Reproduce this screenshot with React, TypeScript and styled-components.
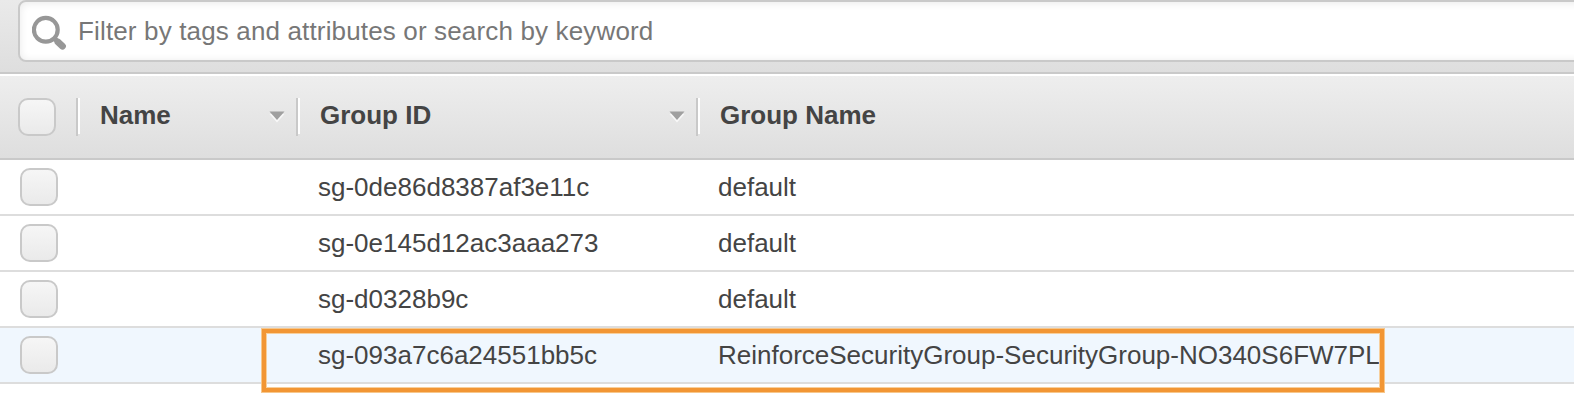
import React from "react";
import styled, { createGlobalStyle } from "styled-components";

const GlobalStyle = createGlobalStyle`
  * { box-sizing: border-box; }
  body {
    margin: 0;
    background: #fff;
    overflow: hidden;
    color: #444;
    font-family: "Liberation Sans", Arial, Helvetica, sans-serif;
    font-size: 26px;
  }
`;

const Page = styled.main`
  width: 1574px;
  height: 420px;
  overflow: hidden;
  background: #fff;
`;

const Toolbar = styled.div`
  height: 74px;
  padding-left: 18px;
  overflow: hidden;
  background: linear-gradient(#eaeaea, #dedede);
  border-bottom: 2px solid #c9c9c9;
`;

const SearchBox = styled.label`
  display: flex;
  align-items: center;
  width: 1600px;
  height: 62px;
  padding-left: 12px;
  background: #fff;
  border: 2px solid #c9c9c9;
  border-radius: 8px;
  box-shadow: inset 0 1px 8px rgba(0, 0, 0, 0.09);
`;

const SearchIcon = styled.svg`
  flex: none;
  width: 36px;
  height: 38px;
  margin-top: 4px;
`;

const Placeholder = styled.span`
  margin-left: 10px;
  color: #777;
  line-height: 58px;
  letter-spacing: 0.15px;
  white-space: pre;
`;

const HeaderRow = styled.div`
  display: flex;
  height: 86px;
  border-top: 2px solid #fff;
  border-bottom: 2px solid #c9c9c9;
  background: linear-gradient(#eeeeee, #dedede) padding-box;
`;

const CheckCell = styled.div<{ $inset: number; $width: number }>`
  display: flex;
  flex: none;
  align-items: center;
  width: ${(p) => p.$width}px;
  padding-left: ${(p) => p.$inset}px;
`;

const Checkbox = styled.span`
  width: 38px;
  height: 38px;
  border: 2px solid #c9c9c9;
  border-radius: 10px;
  background: linear-gradient(#f6f6f6, #eaeaea);
`;

const HeaderCell = styled.div<{ $width?: number }>`
  display: flex;
  align-items: center;
  flex: ${(p) => (p.$width ? `0 0 ${p.$width}px` : "1")};
`;

const Divider = styled.span`
  flex: none;
  width: 4px;
  height: 38px;
  border-left: 2px solid #c9c9c9;

  &::after {
    content: "";
    display: block;
    width: 2px;
    height: 36px;
    background: #fff;
  }
`;

const HeaderLabel = styled.span`
  flex: 1;
  padding: 0 0 4px 20px;
  font-weight: bold;
  white-space: nowrap;
`;

const SortArrow = styled.svg`
  flex: none;
  width: 16px;
  height: 12px;
  margin-right: 11px;
`;

const Row = styled.div<{ $active?: boolean }>`
  display: flex;
  height: 56px;
  border-bottom: 2px solid #dddddd;
  background: ${(p) => (p.$active ? "#f0f7fe" : "#fff")};
`;

const Cell = styled.div<{ $width?: number }>`
  flex: ${(p) => (p.$width ? `0 0 ${p.$width}px` : "1")};
  line-height: 54px;
  white-space: nowrap;
`;

const TableBody = styled.div`
  position: relative;
`;

const Highlight = styled.div`
  position: absolute;
  left: 262px;
  top: 169px;
  width: 1122px;
  height: 63px;
  border: 4px solid #f29634;
  box-shadow: 0 0 0 1px #f7c78c, inset 0 0 0 1px #f7cf9c;
`;

const groups = [
  { id: "sg-0de86d8387af3e11c", name: "default" },
  { id: "sg-0e145d12ac3aaa273", name: "default" },
  { id: "sg-d0328b9c", name: "default" },
  {
    id: "sg-093a7c6a24551bb5c",
    name: "ReinforceSecurityGroup-SecurityGroup-NO340S6FW7PL",
    active: true,
  },
];

const Arrow = () => (
  <SortArrow viewBox="0 0 16 12">
    <path d="M0.5 3H15.5L8 11.5Z" fill="#f8f8f8" />
    <path d="M0.5 0.5H15.5L8 9Z" fill="#a0a0a0" />
  </SortArrow>
);

export default function App() {
  return (
    <Page>
      <GlobalStyle />
      <Toolbar>
        <SearchBox>
          <SearchIcon viewBox="0 0 36 38" fill="none" stroke="#979797">
            <circle cx="13.8" cy="15.8" r="11.9" strokeWidth="4.2" />
            <path d="M22 24L27 29" strokeWidth="5" />
            <path
              d="M26 28L30.5 32.2"
              strokeWidth="6.8"
              strokeLinecap="round"
            />
          </SearchIcon>
          <Placeholder>Filter by tags and attributes or search by keyword</Placeholder>
        </SearchBox>
      </Toolbar>
      <HeaderRow>
        <CheckCell $width={76} $inset={18}>
          <Checkbox />
        </CheckCell>
        <HeaderCell $width={220}>
          <Divider />
          <HeaderLabel>Name</HeaderLabel>
          <Arrow />
        </HeaderCell>
        <HeaderCell $width={400}>
          <Divider />
          <HeaderLabel>Group ID</HeaderLabel>
          <Arrow />
        </HeaderCell>
        <HeaderCell>
          <Divider />
          <HeaderLabel>Group Name</HeaderLabel>
        </HeaderCell>
      </HeaderRow>
      <TableBody>
        {groups.map((group) => (
          <Row key={group.id} $active={group.active}>
            <CheckCell $width={98} $inset={20}>
              <Checkbox />
            </CheckCell>
            <Cell $width={220} />
            <Cell $width={400}>{group.id}</Cell>
            <Cell>{group.name}</Cell>
          </Row>
        ))}
        <Highlight />
      </TableBody>
    </Page>
  );
}
